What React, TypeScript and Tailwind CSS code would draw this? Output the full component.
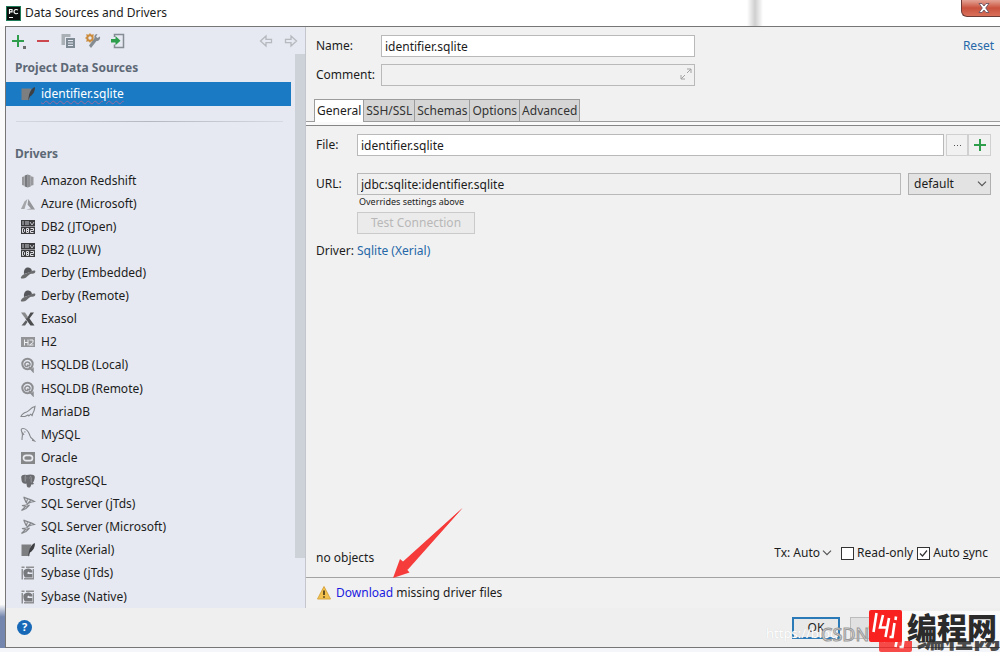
import React, { useState } from "react";
import clsx from "clsx";

type IconName =
  | "redshift" | "azure" | "db2" | "derby" | "exasol" | "h2" | "hsqldb"
  | "mariadb" | "mysql" | "oracle" | "postgres" | "mssql" | "sqlite" | "sybase";

const DRIVERS: { icon: IconName; label: string }[] = [
  { icon: "redshift", label: "Amazon Redshift" },
  { icon: "azure", label: "Azure (Microsoft)" },
  { icon: "db2", label: "DB2 (JTOpen)" },
  { icon: "db2", label: "DB2 (LUW)" },
  { icon: "derby", label: "Derby (Embedded)" },
  { icon: "derby", label: "Derby (Remote)" },
  { icon: "exasol", label: "Exasol" },
  { icon: "h2", label: "H2" },
  { icon: "hsqldb", label: "HSQLDB (Local)" },
  { icon: "hsqldb", label: "HSQLDB (Remote)" },
  { icon: "mariadb", label: "MariaDB" },
  { icon: "mysql", label: "MySQL" },
  { icon: "oracle", label: "Oracle" },
  { icon: "postgres", label: "PostgreSQL" },
  { icon: "mssql", label: "SQL Server (jTds)" },
  { icon: "mssql", label: "SQL Server (Microsoft)" },
  { icon: "sqlite", label: "Sqlite (Xerial)" },
  { icon: "sybase", label: "Sybase (jTds)" },
  { icon: "sybase", label: "Sybase (Native)" },
];

const TABS = ["General", "SSH/SSL", "Schemas", "Options", "Advanced"];

const ICONS: Record<IconName, React.ReactNode> = {
  redshift: (
    <>
      <path d="M2 4l2.500-.7v9.400L2 12zM13.500 4l-2.500-.7v9.400l2.500-.7z" fill="#97999c" />
      <path d="M4.700 2.500L7.700 1.500v13l-3-1z" fill="#77797c" />
      <path d="M7.700 1.500l3 1v11l-3 1z" fill="#8e9093" />
    </>
  ),
  azure: (
    <>
      <path d="M7.500 3L4.500 5.500 1 13h3.500z" fill="#a3a5a8" />
      <path d="M8.300 3L15 13.500H6l5-1-3.400-3.800z" fill="#939598" />
    </>
  ),
  db2: (
    <>
      <path d="M1 1h14v6H1z" fill="#3c3c3e" />
      <path d="M2 3h2M2 5h2M5 3h4M5 5h4M10 3l2 3 2-3" stroke="#c4c6cc" fill="none" />
      <path d="M1 7.500h14V15H1z" fill="#3c3c3e" />
      <path d="M2.500 9.500v4h1l1-1v-2l-1-1zM6.500 9.500v4h2v-4zM6.500 11.500h2M10.500 9.500h3v2h-3v2h3" stroke="#dfe1e7" fill="none" />
    </>
  ),
  derby: (
    <>
      <path d="M4 9C3.500 4.500 5.500 2 8.500 2.500c2.300.3 3.300 1.800 3.500 4z" fill="#55575a" />
      <path d="M.8 12.500c1-2 3-3.500 6-4.200l4-1.800c2-1 4-1.400 4.500-.5.400 1.500-1 2.800-3 2.800-1.500 0-2.500.3-4.300 2-1.500 1.600-2.800 2.700-5 2.700-1.500 0-2.300 0-2.200-1z" fill="#6a6c6e" />
    </>
  ),
  exasol: (
    <>
      <path d="M1 1.500h4l3 4.500L6.500 9z" fill="#88898b" />
      <path d="M10.500 1.500H14L9.500 7.500 14.500 14.500h-4L5.500 7.500H7z" fill="#4b4d4f" />
      <path d="M6 9l1.500 2L5 14.500H1.500z" fill="#5e6062" />
    </>
  ),
  h2: (
    <>
      <path d="M1 3h14v10H1z" fill="#929497" />
      <path d="M4.500 5.500v6M8 5.500v6M4.500 8.500H8M9.500 6H13v2.500L9.500 11H13.500" stroke="#eceef2" fill="none" />
    </>
  ),
  hsqldb: (
    <>
      <circle cx="7.500" cy="7" r="5.200" stroke="#8b8d90" strokeWidth="2" fill="none" />
      <path d="M8 9.500C5.500 10 4.500 8.500 5 6.500 6 4.500 9.500 4.500 10 7c.3 2-2 2.500-2.500.5M9 10l4 4.500v-4" stroke="#8b8d90" strokeWidth="1.500" fill="none" />
    </>
  ),
  mariadb: (
    <path d="M1 12.500c1-2.800 3.200-3.800 5.500-4.500 2-.7 3.500-2.400 5-3.800 1-.8 2-1 3.500-1.700-.6 2.700-.6 4.500-2 6.500-.8 1.200-.4 2-.9 2.700l-1.300-1.500-2 1.800L8 11l-3 1.500z" stroke="#85878b" strokeWidth="1.100" fill="none" />
  ),
  mysql: (
    <path d="M2 13C2 9 3 8 2 5.500 1 3 .8 1.500 2.800 1.500c3 0 5.700 3 6.700 6 .6 2 .8 3.500 3 4.500l2 2-2.500-.7M4.500 4.500l.8.800M2.500 5.500L4 8" stroke="#85878b" strokeWidth="1.100" fill="none" />
  ),
  oracle: (
    <>
      <path d="M1 2h14v12H1z" fill="#858789" />
      <rect x="3.500" y="5.300" width="9" height="5.400" rx="2.700" fill="none" stroke="#e9ebf0" strokeWidth="1.700" />
    </>
  ),
  postgres: (
    <>
      <path d="M1.200 4C1.500 1.500 4.500 1.300 6.500 2c3-.8 8.300-1 8.300 2 0 2-1 4.500-2 6l1.400.4c-.6 1-1.800 1.200-3 1-.3 2-.7 3.200-2.500 3.200-2 0-2-2-2.200-4-2.500.8-4.800-.6-5-3.600z" fill="#696b6e" />
      <path d="M5.500 2.500c-.8 2 0 4-.3 6M10.500 3c1.300 2 .3 4 .8 6.500M6.500 5h.8M9.300 5h.7" stroke="#a5a7ab" strokeWidth=".8" fill="none" />
    </>
  ),
  mssql: (
    <path d="M3.500 1c3 1.800 6.500 2 11 4.500-3 .5-6 1-8 3M4 1.500c1 3 1.500 5 4 7M7.500 3.500L6 7M10.500 4.500L7 8.500M6.500 9l-4.500.5 3.500 1L1.500 14.500l4.500-2L9.500 9l-3 1.500" stroke="#85878b" strokeWidth="1.200" fill="none" />
  ),
  sqlite: (
    <>
      <path d="M1.500 2.500h10l-2 6.500v5h-8z" fill="#7c7e80" />
      <path d="M14.800 1c.6 3-1.300 7.500-4.800 9.500L8 15l1-6c1-4 3.300-7 5.800-8z" fill="#3d3f42" />
    </>
  ),
  sybase: (
    <>
      <path d="M1.500 1.500h3v1.500h-3zM6 1.500h8V3H6zM1.500 4H3v10.500H1.500zM4 13h9v1.500H4zM12.700 4H14v10.500h-1.300z" fill="#8d8f92" />
      <path d="M3.500 6C5 2.500 11.500 2.500 12.300 6v1.500H9.500C9 6.500 7.500 6.500 7.500 8v1h4.800v3.500H5c-1-1-2-4-1.500-6.500z" fill="#77797c" />
    </>
  ),
};

function DbIcon({ name }: { name: IconName }) {
  return (
    <svg viewBox="0 0 16 16" className="size-4 shrink-0" aria-hidden="true">
      {ICONS[name]}
    </svg>
  );
}

function Plus({ className }: { className?: string }) {
  return (
    <svg viewBox="0 0 16 16" className={clsx("size-4", className)} aria-hidden="true">
      <path d="M8 2v12M2 8h12" stroke="#2f9e4c" strokeWidth="2" />
    </svg>
  );
}

function Chevron({ className }: { className?: string }) {
  return (
    <svg viewBox="0 0 10 6" className={clsx("h-[6px] w-[10px]", className)} aria-hidden="true">
      <path d="M1 .7l4 4 4-4" stroke="#555" strokeWidth="1.200" fill="none" />
    </svg>
  );
}

function TitleBar() {
  return (
    <header className="flex h-[26px] shrink-0 items-center bg-white pl-[6px]">
      <svg viewBox="0 0 15 15" className="size-[15px]" aria-hidden="true">
        <path d="M0 0h15v15H0z" fill="#1d7a56" />
        <path d="M1 1h13v13H1z" fill="#0a0f0d" />
        <path d="M3.500 8V3.500H6v2.300H3.500M12 4C9.500 2.800 8 4 8 5.700S10 8.300 12 7.300M3 11.500h4" stroke="#fff" strokeWidth="1.200" fill="none" />
      </svg>
      <h1 className="ml-1 text-xs">Data Sources and Drivers</h1>
      <div className="flex h-full flex-1 items-start justify-end">
        <div className="mr-[198px] h-full w-[16px] bg-linear-to-r from-white via-[#cfcfcf] to-white" />
        <button
          aria-label="Close"
          className="flex h-[17px] w-[39px] items-center justify-center rounded-bl-md border-b border-l border-[#6d3a36] bg-linear-to-b from-[#e3a396] via-[#c9513d] to-[#d9705a] pl-[6px]"
        >
          <svg viewBox="0 0 12 10" className="h-[10px] w-[12px]">
            <path d="M1 .5h3l2 2.500L8 .5h3L7.700 5 11 9.500H8L6 7 4 9.500H1L4.300 5z" fill="#fff" stroke="#5c4a5c" strokeWidth=".8" />
          </svg>
        </button>
      </div>
    </header>
  );
}

function Toolbar() {
  return (
    <div className="flex h-[27px] shrink-0 items-center gap-[9px] pr-[6px] pl-1">
      <button aria-label="Add" className="relative">
        <Plus />
        <span className="absolute right-0 bottom-0 size-[3px] bg-[#6e6e6e]" />
      </button>
      <button aria-label="Remove">
        <svg viewBox="0 0 16 16" className="size-4">
          <path d="M2 8h12" stroke="#c8373c" strokeWidth="1.800" />
        </svg>
      </button>
      <button aria-label="Duplicate">
        <svg viewBox="0 0 16 16" className="size-4">
          <path d="M1.500 1h9v3H5v8H1.500z" fill="#a9b0b6" />
          <path d="M6 5h9v10H6z" fill="#7f8b94" />
          <path d="M8 7.500h5M8 10h5M8 12.500h5" stroke="#e6e9f1" />
        </svg>
      </button>
      <button aria-label="Settings">
        <svg viewBox="0 0 16 16" className="size-4">
          <path d="M15 3.500l-2.500 1.500L11 3.800 12.500 1C10 1 8.800 3 9.500 5L4 12.500 6 15l5.500-7C14 8 15.500 6 15 3.500z" fill="#858c92" />
          <circle cx="5" cy="5" r="2.700" stroke="#cb8b3c" strokeWidth="2" fill="none" />
          <path d="M5 .5v2M5 7.500v2M.5 5h2M1.500 1.500l1.500 1.500M8.500 1.500L7 3M1.500 8.500L3 7" stroke="#cb8b3c" strokeWidth="1.400" />
        </svg>
      </button>
      <button aria-label="Import">
        <svg viewBox="0 0 16 16" className="size-4">
          <path d="M4.500 4V1.500h9v13h-9v-3" stroke="#858c92" strokeWidth="1.500" fill="none" />
          <path d="M1 6h4.500V3L10.500 7.700l-5 4.500V9.400H1z" fill="#2f9e4c" />
        </svg>
      </button>
      <div className="ml-auto flex gap-[9px]">
        <button aria-label="Back">
          <svg viewBox="0 0 16 16" className="size-4">
            <path d="M2.500 8L8 3v3.300h5.500v3.400H8V13z" stroke="#b6b9be" strokeWidth="1.300" fill="none" />
          </svg>
        </button>
        <button aria-label="Forward">
          <svg viewBox="0 0 16 16" className="size-4">
            <path d="M13.500 8L8 3v3.300H2.500v3.400H8V13z" stroke="#b6b9be" strokeWidth="1.300" fill="none" />
          </svg>
        </button>
      </div>
    </div>
  );
}

function Sidebar() {
  return (
    <aside className="flex w-[300px] shrink-0 flex-col border-r border-[#c3c6cc] bg-[#e6e9f1]">
      <Toolbar />
      <div className="flex flex-1">
        <nav className="flex flex-1 flex-col">
          <h2 className="flex h-7 items-center pl-[9px] text-xs font-bold text-[#5d6876]">Project Data Sources</h2>
          <a href="#identifier" className="mr-1 flex h-6 items-center gap-[5px] bg-[#1a7bc4] pl-[14px] text-xs text-white">
            <DbIcon name="sqlite" />
            <span className="underline decoration-[#9c6a9c] decoration-wavy decoration-1 underline-offset-2">identifier.sqlite</span>
          </a>
          <div className="mt-[15px] mr-3 ml-[10px] h-px bg-linear-to-r from-[#d5d8de] via-[#b5b8be] to-[#d5d8de]" />
          <h2 className="mt-[18px] flex h-7 items-center pl-[9px] text-xs font-bold text-[#5d6876]">Drivers</h2>
          <ul className="flex flex-1 flex-col pt-px">
            {DRIVERS.map((d) => (
              <li key={d.label} className="flex min-h-0 flex-1 items-center gap-[5px] pl-[14px] text-xs">
                <DbIcon name={d.icon} />
                {d.label}
              </li>
            ))}
          </ul>
        </nav>
        <div className="mb-[50px] w-[10px] bg-[#cdd1d8]" />
      </div>
    </aside>
  );
}

function DetailForm() {
  const [tab, setTab] = useState("General");
  return (
    <div className="flex flex-1 flex-col">
      <div className="flex flex-col gap-[7px] pt-2 pr-[6px] pl-[10px]">
        <div className="flex items-center">
          <label htmlFor="name" className="w-[65px]">Name:</label>
          <input id="name" defaultValue="identifier.sqlite" className="h-[22px] w-[314px] border border-[#b9b9b9] bg-white px-[3px]" />
          <a href="#reset" className="ml-auto text-[#2668a8]">Reset</a>
        </div>
        <div className="flex items-center">
          <label htmlFor="comment" className="w-[65px]">Comment:</label>
          <div className="relative">
            <input id="comment" className="block h-[22px] w-[314px] border border-[#b9b9b9] bg-[#f1f1f1] pr-5 pl-[3px]" />
            <svg viewBox="0 0 12 12" className="absolute top-1 right-[3px] size-3" aria-hidden="true">
              <path d="M7 1h4v4M11 1L7 5M5 11H1V7M1 11l4-4" stroke="#a2a2a2" fill="none" />
            </svg>
          </div>
        </div>
      </div>

      <div className="mt-[13px] flex">
        <div className="w-2 border-b border-[#9c9c9c]" />
        <div role="tablist" className="flex">
          {TABS.map((t) => (
            <button
              key={t}
              role="tab"
              aria-selected={t === tab}
              onClick={() => setTab(t)}
              className={clsx(
                "h-[23px] border-t border-r border-[#9c9c9c] px-[2px]",
                t === tab ? "border-l bg-white" : "border-b bg-[#d5d5d5] text-[#333]",
              )}
            >
              {t}
            </button>
          ))}
        </div>
        <div className="flex-1 border-b border-[#9c9c9c]" />
      </div>
      <div className="h-[4px] border-b border-[#868686] bg-[#fafafa]" />

      <div className="flex flex-col pt-2 pr-[9px] pl-[10px]">
        <div className="flex items-center">
          <label htmlFor="file" className="w-[41px]">File:</label>
          <input id="file" defaultValue="identifier.sqlite" className="h-[22px] min-w-0 flex-1 border border-[#b9b9b9] bg-white px-[3px]" />
          <button aria-label="Browse" className="ml-[2px] flex h-[22px] w-[22px] items-center justify-center gap-[2px] border border-[#d0d0d0]">
            <i className="size-px bg-[#555]" />
            <i className="size-px bg-[#555]" />
            <i className="size-px bg-[#555]" />
          </button>
          <button aria-label="New file" className="flex h-[22px] w-[23px] items-center justify-center border border-[#d0d0d0]">
            <Plus />
          </button>
        </div>
        <div className="mt-[17px] flex items-center">
          <label htmlFor="url" className="w-[41px]">URL:</label>
          <input id="url" defaultValue="jdbc:sqlite:identifier.sqlite" className="h-[22px] min-w-0 flex-1 border border-[#b9b9b9] bg-[#f0f0f0] px-[3px]" />
          <div className="relative ml-[7px]">
            <select aria-label="URL type" className="block h-[22px] w-[83px] appearance-none border border-[#b0b0b0] bg-[#e3e3e3] pl-[5px]">
              <option>default</option>
            </select>
            <Chevron className="pointer-events-none absolute top-2 right-1" />
          </div>
        </div>
        <p className="ml-[43px] h-[17px] text-[9px] leading-[14px]">Overrides settings above</p>
        <button disabled className="ml-[41px] h-[22px] w-[118px] border border-[#cacaca] bg-[#ebebeb] text-[#b8b8b8]">
          Test Connection
        </button>
        <p className="mt-2 leading-[18px]">
          Driver: <a href="#driver" className="text-[#2668a8]">Sqlite (Xerial)</a>
        </p>
      </div>

      <div className="mt-auto flex items-start pr-3 pb-[11px] pl-[10px]">
        <span className="pt-[5px]">no objects</span>
        <button className="ml-auto flex items-center gap-[2px]">
          Tx: Auto
          <Chevron />
        </button>
        <label className="ml-[9px] flex items-center gap-[3px]">
          <input type="checkbox" className="size-[13px] appearance-none border border-[#333] bg-white" />
          Read-only
        </label>
        <label className="ml-1 flex items-center gap-[3px]">
          <span className="relative">
            <input type="checkbox" defaultChecked className="block size-[13px] appearance-none border border-[#333] bg-white" />
            <svg viewBox="0 0 13 13" className="pointer-events-none absolute inset-0 size-[13px]" aria-hidden="true">
              <path d="M3 6.500L5.500 9 10 3.500" stroke="#333" strokeWidth="1.200" fill="none" />
            </svg>
          </span>
          <span>Auto <u>s</u>ync</span>
        </label>
      </div>
      <div className="relative flex h-[31px] items-center gap-1 border-t border-[#a3a3a3] pl-[10px] text-xs">
        <svg viewBox="0 0 16 16" className="size-4" aria-hidden="true">
          <path d="M8 1.500l6.500 12.500h-13z" fill="#f2c14e" stroke="#d9a741" strokeLinejoin="round" />
          <path d="M8 5.500v4.500M8 11.300v1.500" stroke="#4a3a18" strokeWidth="1.700" />
        </svg>
        <span><a href="#download" className="text-[#1a1ae0]">Download</a> missing driver files</span>
        <svg viewBox="0 0 70 70" className="pointer-events-none absolute bottom-[30px] left-[87px] size-[70px]" aria-hidden="true">
          <path d="M69.500 0L14 61.500l2.500 3L0 70 7 51l3.500 3z" fill="#f63b3b" />
          <path d="M69.500 0L14.500 62l-5-8z" fill="#f63b3b" />
        </svg>
      </div>
    </div>
  );
}

function LogoMark() {
  return (
    <svg viewBox="0 0 33 32" className="h-8 w-[33px] shrink-0" aria-hidden="true">
      <rect width="33" height="32" rx="2" fill="#f8211f" />
      <path d="M7.500 3L4.500 22M14 5l-3 12.500h6.500M20 8l-3.500 19M25.500 13l-2 14h-3M27 6.500l-.5 3.500" stroke="#fff" strokeWidth="2.600" fill="none" />
    </svg>
  );
}

function Watermark() {
  return (
    <div className="pointer-events-none absolute right-0 bottom-0 h-[44px] w-[234px] overflow-hidden">
      <span className="absolute top-[17px] left-0 text-[13px] text-white [text-shadow:0_0_1px_#ccc]">https://blog</span>
      <span className="absolute top-[14px] left-[55px] text-[18px] leading-6 text-[#eee] [-webkit-text-stroke:1px_#999]">CSDN</span>
      <div className="absolute top-[12px] left-[113px] flex items-center gap-[5px] opacity-80">
        <LogoMark />
        <span className="font-['Noto_Sans_CJK_SC',sans-serif] text-[28px] leading-8 font-black whitespace-nowrap text-[#222]">编程网</span>
      </div>
      <div className="absolute top-[2px] left-[103px] flex items-center">
        <LogoMark />
        <span className="h-[30px] w-[98px] bg-[#fafafa] pl-[5px] font-['Noto_Sans_CJK_SC',sans-serif] text-[30px] leading-[30px] font-black whitespace-nowrap text-[#2b2b2b]">编程网</span>
      </div>
    </div>
  );
}

export default function App() {
  return (
    <div className="relative flex min-h-screen flex-col overflow-hidden bg-white font-['Noto_Sans','Open_Sans',sans-serif] text-xs text-[#1c1c1c]">
      <TitleBar />
      <div className="flex flex-1">
        <div className="w-[5px] bg-linear-to-b from-[#fafafa] from-93% to-[#7486ad] to-95%" />
        <div className="flex flex-1 flex-col border-t border-b border-l border-[#767676] bg-[#f1f1f1]">
          <main className="flex flex-1">
            <Sidebar />
            <DetailForm />
          </main>
          <footer className="flex h-[39px] shrink-0 items-center bg-[#efefef] pr-[76px] pl-[11px]">
            <button aria-label="Help" className="flex size-[15px] items-center justify-center rounded-full bg-[#1769b8] text-[11px] font-bold text-white">?</button>
            <div className="ml-auto flex gap-[10px]">
              <button className="flex h-[22px] w-[48px] items-center justify-center border-2 border-[#2a7ab8] bg-[#e8e8e8]">OK</button>
              <button className="h-[22px] w-[74px] border border-[#bcbcbc] bg-[#e1e1e1]">Cancel</button>
            </div>
          </footer>
        </div>
      </div>
      <div className="h-1 shrink-0 bg-[#f4f6f9]" />
      <Watermark />
    </div>
  );
}
